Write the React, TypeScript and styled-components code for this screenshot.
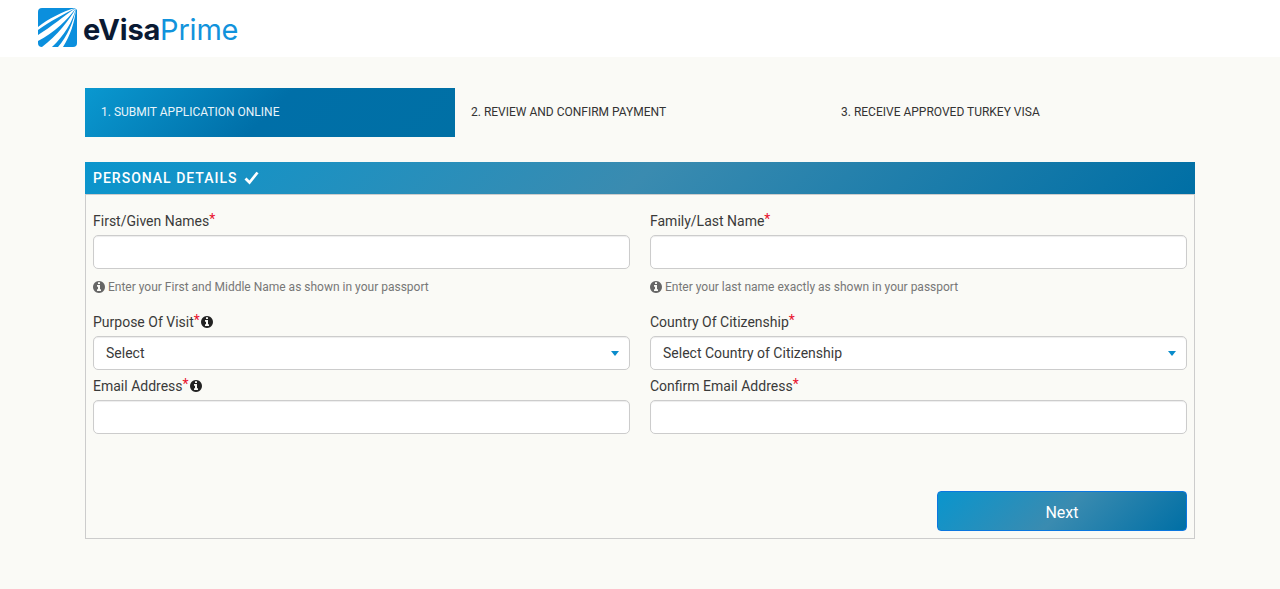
import React from "react";
import styled, { createGlobalStyle } from "styled-components";

const GlobalStyle = createGlobalStyle`
  html, body {
    margin: 0;
    padding: 0;
    background: #fafaf6;
    font-family: Roboto, "Liberation Sans", sans-serif;
    color: #333;
  }
  * { box-sizing: border-box; }
`;

const Header = styled.header`
  height: 57px;
  background: #fff;
  padding: 8px 0 0 38px;
  display: flex;
  align-items: flex-start;
`;

const Brand = styled.div`
  display: flex;
  align-items: center;
  gap: 6px;
  height: 39px;
`;

const BrandText = styled.span`
  font-family: Inter, "Liberation Sans", sans-serif;
  font-size: 29px;
  letter-spacing: -0.2px;
  font-weight: 700;
  color: #0a1a33;
  margin-top: 4px;
`;

const BrandAccent = styled.span`
  font-weight: 400;
  color: #1193dc;
`;

const Main = styled.main`
  padding: 31px 85px 0;
`;

const Steps = styled.ol`
  list-style: none;
  margin: 0 0 25px;
  padding: 0;
  display: grid;
  grid-template-columns: repeat(3, 370px);
`;

const Step = styled.li<{ $active?: boolean }>`
  height: 49px;
  padding: 0 0 2px 16px;
  display: flex;
  align-items: center;
  font-size: 12px;
  color: ${(p) => (p.$active ? "#e8f4fa" : "#333")};
  background: ${(p) =>
    p.$active ? "linear-gradient(135deg, #0a98d0 0%, #006fa8 50%, #0070a5 100%)" : "none"};
`;

const SectionTitle = styled.h2`
  margin: 0;
  height: 32px;
  padding-left: 8px;
  display: flex;
  align-items: center;
  gap: 6px;
  font-size: 14px;
  font-weight: 500;
  letter-spacing: 1px;
  color: #fff;
  background: linear-gradient(135deg, #0a95cd 0%, #3a8bb0 50%, #006fa5 100%);
`;

const Panel = styled.section`
  border: 1px solid #ccc;
  padding: 16px 7px 7px;
`;

const FormGrid = styled.div`
  display: grid;
  grid-template-columns: 537px 537px;
  column-gap: 20px;
`;

const Field = styled.div<{ $gap?: number }>`
  margin-bottom: ${(p) => p.$gap ?? 0}px;
`;

const Label = styled.label`
  height: 20px;
  margin-bottom: 4px;
  display: flex;
  align-items: center;
  gap: 0;
  font-size: 14px;
  line-height: 20px;
  color: #3a3a3a;
`;

const Required = styled.span`
  color: #e8112d;
  position: relative;
  top: -2px;
  margin-right: 1px;
`;

const InfoGlyph = styled.svg<{ $tone?: string }>`
  width: 12px;
  height: 12px;
  flex: none;
  fill: ${(p) => p.$tone ?? "#222"};
`;

const TextInput = styled.input`
  display: block;
  width: 100%;
  height: 34px;
  background: #fff;
  border: 1px solid #ccc;
  border-radius: 5px;
  box-shadow: inset 0 1px 1px rgba(0, 0, 0, 0.075);
  outline: none;
`;

const SelectBox = styled.div`
  height: 34px;
  padding: 0 12px;
  display: flex;
  align-items: center;
  justify-content: space-between;
  background: #fff;
  border: 1px solid #ccc;
  border-radius: 5px;
  box-shadow: inset 0 1px 1px rgba(0, 0, 0, 0.075);
  font-size: 14px;
  color: #3a3a3a;
`;

const Caret = styled.span`
  margin-right: -2px;
  border-left: 4px solid transparent;
  border-right: 4px solid transparent;
  border-top: 5px solid #0a8ccb;
`;

const Hint = styled.p`
  margin: 9px 0 0;
  height: 18px;
  display: flex;
  align-items: center;
  gap: 3px;
  font-size: 12px;
  color: #777;
`;

const Actions = styled.div`
  margin-top: 57px;
  display: flex;
  justify-content: flex-end;
`;

const NextButton = styled.button`
  width: 250px;
  height: 40px;
  padding: 2px 0 0;
  border: 1px solid #0b77e0;
  border-radius: 4px;
  background: linear-gradient(135deg, #0a95cd 0%, #3a8bb0 50%, #006fa5 100%);
  color: #fff;
  font-family: inherit;
  font-size: 16px;
`;

const Logo = () => (
  <svg width="39" height="39" viewBox="0 0 39 39">
    <path
      d="M4 0H37L39 2V35a4 4 0 0 1-4 4H4a4 4 0 0 1-4-4V4a4 4 0 0 1 4-4Z"
      fill="#0b8fdd"
    />
    <path d="M38 0C25 3 10 11 0 19V22C11 14 26 6 38 0Z" fill="#fff" />
    <path d="M38 0C27 7 13 19 0 27V33C16 25 30 11 38 0Z" fill="#fff" />
    <path d="M38 0C32 11 19 28 4 39H14C26 28 35 13 38 0Z" fill="#fff" />
    <path d="M38 0C36 13 29 29 20 39H25C32 28 37 14 38 0Z" fill="#fff" />
  </svg>
);

const InfoIcon = ({ tone }: { tone?: string }) => (
  <InfoGlyph $tone={tone} viewBox="128 128 1536 1536">
    <path d="M1152 1376v-160q0-14-9-23t-23-9h-96v-512q0-14-9-23t-23-9h-320q-14 0-23 9t-9 23v160q0 14 9 23t23 9h96v320h-96q-14 0-23 9t-9 23v160q0 14 9 23t23 9h448q14 0 23-9t9-23zm-128-896v-160q0-14-9-23t-23-9h-192q-14 0-23 9t-9 23v160q0 14 9 23t23 9h192q14 0 23-9t9-23zm640 416q0 209-103 385.5t-279.5 279.5-385.5 103-385.5-103-279.5-279.5-103-385.5 103-385.5 279.5-279.5 385.5-103 385.5 103 279.5 279.5 103 385.5z" />
  </InfoGlyph>
);

const CheckIcon = () => (
  <svg width="15" height="14" viewBox="0 0 15 14" fill="none" stroke="#fff" strokeWidth="2.8">
    <path d="M1.5 7.5L5.5 11.5L13.5 1.5" />
  </svg>
);

export default function App() {
  return (
    <>
      <GlobalStyle />
      <Header>
        <Brand>
          <Logo />
          <BrandText>
            eVisa<BrandAccent>Prime</BrandAccent>
          </BrandText>
        </Brand>
      </Header>
      <Main>
        <Steps>
          <Step $active>1. SUBMIT APPLICATION ONLINE</Step>
          <Step>2. REVIEW AND CONFIRM PAYMENT</Step>
          <Step>3. RECEIVE APPROVED TURKEY VISA</Step>
        </Steps>
        <SectionTitle>
          PERSONAL DETAILS <CheckIcon />
        </SectionTitle>
        <Panel>
          <FormGrid>
            <Field $gap={16}>
              <Label>
                First/Given Names<Required>*</Required>
              </Label>
              <TextInput />
              <Hint>
                <InfoIcon tone="#666" />
                Enter your First and Middle Name as shown in your passport
              </Hint>
            </Field>
            <Field $gap={16}>
              <Label>
                Family/Last Name<Required>*</Required>
              </Label>
              <TextInput />
              <Hint>
                <InfoIcon tone="#666" />
                Enter your last name exactly as shown in your passport
              </Hint>
            </Field>
            <Field $gap={6}>
              <Label>
                Purpose Of Visit<Required>*</Required>
                <InfoIcon />
              </Label>
              <SelectBox>
                Select
                <Caret />
              </SelectBox>
            </Field>
            <Field $gap={6}>
              <Label>
                Country Of Citizenship<Required>*</Required>
              </Label>
              <SelectBox>
                Select Country of Citizenship
                <Caret />
              </SelectBox>
            </Field>
            <Field>
              <Label>
                Email Address<Required>*</Required>
                <InfoIcon />
              </Label>
              <TextInput />
            </Field>
            <Field>
              <Label>
                Confirm Email Address<Required>*</Required>
              </Label>
              <TextInput />
            </Field>
          </FormGrid>
          <Actions>
            <NextButton>Next</NextButton>
          </Actions>
        </Panel>
      </Main>
    </>
  );
}
